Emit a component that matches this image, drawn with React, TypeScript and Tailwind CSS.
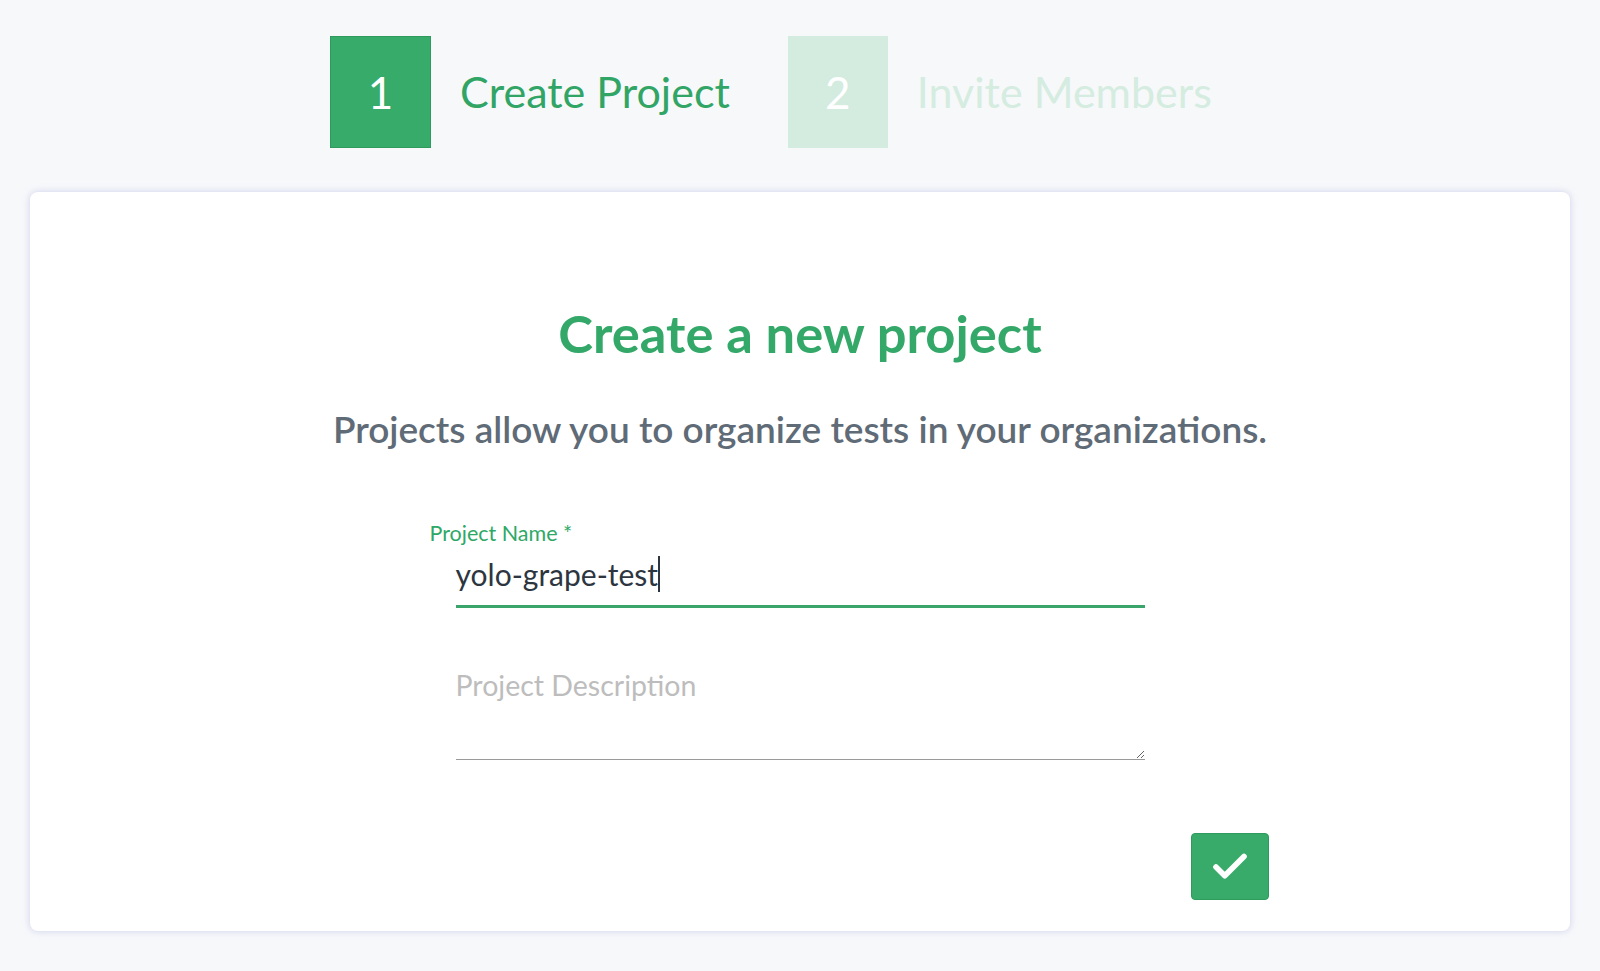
import { Check } from "lucide-react";

const font = { fontFamily: '"Lato", "Noto Sans", sans-serif' };

function Step({ num, label, active }: { num: string; label: string; active: boolean }) {
    return (
        <div className="flex items-center mr-[58px]">
            <div
                className={
                    active
                        ? "w-[101px] h-[112px] flex items-center justify-center bg-[#37ab6a] border border-[#2f9a5d] text-white text-[44px]"
                        : "w-[100px] h-[112px] flex items-center justify-center bg-[#d4ebdf] text-white text-[44px]"
                }
            >
                {num}
            </div>
            <div className={active ? "ml-[29px] text-[43px] text-[#31a565]" : "ml-[29px] text-[43px] text-[#d5ece0]"}>
                {label}
            </div>
        </div>
    );
}

export default function App() {
    return (
        <div className="min-h-screen bg-[#f7f8fa] px-[30px] pt-[36px] pb-[40px]" style={font}>
            {/* Stepper */}
            <div className="flex justify-center">
                <Step num="1" label="Create Project" active />
                <Step num="2" label="Invite Members" active={false} />
            </div>

            {/* Card */}
            <div className="mt-[44px] h-[739px] bg-white rounded-[8px] shadow-[0_0_7px_rgba(175,180,225,0.6)] pt-[110px]">
                <h1 className="text-center text-[52.5px] leading-[62px] font-bold text-[#34a868]">
                    Create a new project
                </h1>
                <p className="mt-[42px] text-center text-[37px] leading-[46px] font-semibold text-[#5f6b76]">
                    Projects allow you to organize tests in your organizations.
                </p>

                <div className="w-[689px] mx-auto mt-[68px]">
                    {/* Project name */}
                    <div className="-ml-[26px] text-[21.5px] leading-[26px] text-[#2ea866]">Project Name *</div>
                    <div className="mt-[8px] pb-[11px] border-b-[3px] border-[#3aa56b] flex items-center">
                        <span className="text-[30px] leading-[40px] text-[#2d3640]">yolo-grape-test</span>
                        <span className="w-[2px] h-[36px] bg-[#2d3640]" />
                    </div>

                    {/* Project description */}
                    <textarea
                        placeholder="Project Description"
                        className="block w-full mt-[58px] h-[94px] text-[28.5px] leading-[38px] text-[#2d3640] placeholder:text-[#bdbdbd] border-b border-[#9a9a9a] outline-none bg-transparent"
                    />

                    {/* Submit */}
                    <div className="flex justify-end -mr-[124px] mt-[73px]">
                        <button className="w-[78px] h-[67px] rounded-[4px] bg-[#38ab6a] border border-[#2f9a5d] flex items-center justify-center text-white">
                            <Check size={42} strokeWidth={3.2} />
                        </button>
                    </div>
                </div>
            </div>
        </div>
    );
}
